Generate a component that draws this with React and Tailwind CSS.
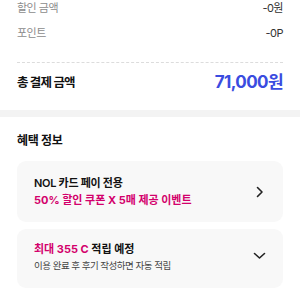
import React from 'react';

const font = { fontFamily: 'Inter, "Noto Sans CJK KR", sans-serif' };

const ChevronRight = () => (
  <svg width="8" height="12" viewBox="0 0 8 12" fill="none">
    <path d="M1.5 1.5L6 6l-4.5 4.5" stroke="#222" strokeWidth="1.6" strokeLinecap="round" strokeLinejoin="round" />
  </svg>
);

const ChevronDown = () => (
  <svg width="13" height="8" viewBox="0 0 13 8" fill="none">
    <path d="M1.5 1.5L6.5 6l5-4.5" stroke="#222" strokeWidth="1.6" strokeLinecap="round" strokeLinejoin="round" />
  </svg>
);

export default function App() {
  return (
    <div className="w-[300px] h-[300px] overflow-hidden bg-white" style={font}>
      {/* Price summary */}
      <div className="px-[17px]">
        <div className="flex flex-col gap-[9px]">
          <div className="h-[16px] flex items-center justify-between text-[11px] tracking-[-0.5px]">
            <span className="text-[#8c8c8c]">할인 금액</span>
            <span className="text-[#333]">-0원</span>
          </div>
          <div className="h-[16px] flex items-center justify-between text-[11px] tracking-[-0.5px]">
            <span className="text-[#8c8c8c]">포인트</span>
            <span className="text-[#333]">-0P</span>
          </div>
        </div>
        <div className="mt-[21px] border-t border-dashed border-[#dcdcdc]" />
        <div className="mt-[8px] h-[24px] flex items-center justify-between">
          <span className="text-[12.5px] font-bold tracking-[-0.8px] text-[#111]">총 결제 금액</span>
          <span className="text-[17px] font-bold tracking-[-0.6px] text-[#3a4ce0]">71,000원</span>
        </div>
      </div>

      <div className="mt-[15px] h-[7px] bg-[#f3f3f3]" />

      {/* Benefits */}
      <div className="px-[17px]">
        <h2 className="mt-[14px] h-[20px] flex items-center text-[12px] font-bold tracking-[-0.3px] text-[#111]">혜택 정보</h2>

        <div className="mt-[10px] h-[61px] rounded-[9px] bg-[#f8f8f8] pl-[17px] pr-[19px] flex items-center justify-between">
          <div className="flex flex-col">
            <span className="leading-[17px] text-[11px] font-semibold tracking-[-0.3px] text-[#111]">NOL 카드 페이 전용</span>
            <span className="leading-[17px] text-[11px] font-bold text-[#d3006c]">50% 할인 쿠폰 X 5매 제공 이벤트</span>
          </div>
          <ChevronRight />
        </div>

        <div className="mt-[7px] h-[59px] rounded-[9px] bg-[#f8f8f8] pl-[17px] pr-[17px] pt-[12px] flex justify-between">
          <div className="flex flex-col">
            <span className="leading-[17px] text-[11px] font-bold text-[#111]">
              <span className="text-[#d3006c]">최대 355 C</span> 적립 예정
            </span>
            <span className="leading-[16px] text-[9.5px] tracking-[-0.5px] text-[#444]">이용 완료 후 후기 작성하면 자동 적립</span>
          </div>
          <div className="mt-[11px]">
            <ChevronDown />
          </div>
        </div>
      </div>
    </div>
  );
}
